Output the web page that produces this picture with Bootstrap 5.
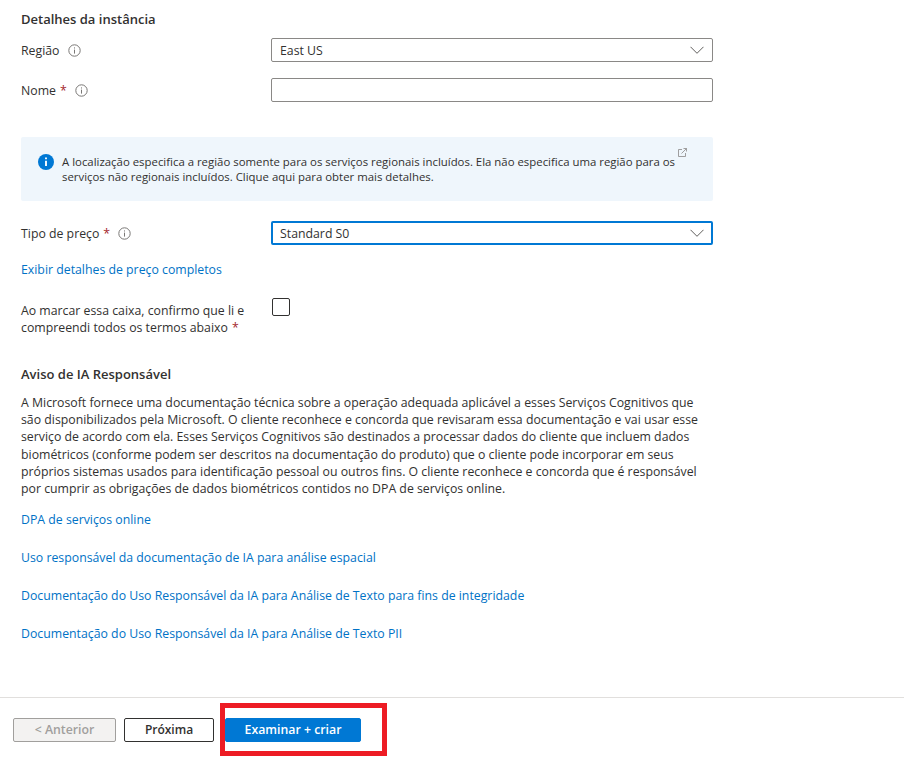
<!DOCTYPE html>
<html lang="pt">
<head>
    <meta charset="UTF-8">
    <meta name="viewport" content="width=device-width, initial-scale=1.0">
    <title>Detalhes da instância</title>

    <link href="https://cdn.jsdelivr.net/npm/bootstrap@5.3.0/dist/css/bootstrap.min.css" rel="stylesheet">

    <style>
        body {
            font-family: "Open Sans", "Noto Sans", sans-serif;
            font-size: 12.3px;
            line-height: 17px;
            color: #323130;
            background: #fff;
        }
        a { color: #0072c6; text-decoration: none; }

        .form-area { width: 713px; padding: 11px 0 0 21px; height: 697px; }
        .sec-title { font-weight: 600; font-size: 13px; line-height: 17px; margin: 0; }
        .field-row { display: flex; align-items: center; height: 24px; }
        .field-label { width: 250px; display: flex; align-items: center; }
        .req { color: #a4262c; margin-left: 4px; }
        .tip-icon { width: 13px; height: 13px; margin-left: 8px; color: #797775; }

        .az-input {
            flex: 1;
            height: 24px;
            border: 1px solid #8a8886;
            border-radius: 2px;
            padding: 0 8px;
            display: flex;
            align-items: center;
            justify-content: space-between;
            background: #fff;
        }
        .az-input.is-focus { border: 2px solid #0078d4; padding: 0 7px; }
        .az-input svg { width: 14px; height: 8px; color: #605e5c; }

        .info-box {
            background: #eff6fc;
            border-radius: 2px;
            height: 64px;
            margin-top: 35px;
            padding: 17px 17px;
            display: flex;
            font-size: 11.4px;
            line-height: 15px;
            position: relative;
        }
        .info-box .info-dot { width: 16px; height: 16px; flex: none; margin: 0 8px 0 0; }
        .info-box p { margin: 0; width: 625px; }
        .ext-icon { position: absolute; right: 26px; top: 11px; width: 9px; height: 9px; color: #8a8886; }

        .check-box {
            width: 18px;
            height: 18px;
            border: 1px solid #323130;
            border-radius: 2px;
            margin-left: 1px;
        }
        .check-label { width: 250px; padding-top: 4px; }
        .terms-text { margin: 11px 0 0; width: 680px; line-height: 17.2px; }

        .page-foot { border-top: 1px solid #e1dfdd; height: 61px; position: relative; padding: 20px 0 0 13px; }
        .az-btn {
            height: 24px;
            font-size: 12.3px;
            font-weight: 600;
            line-height: 22px;
            padding: 0;
            text-align: center;
            --bs-btn-border-radius: 2px;
        }
        .btn-prev { width: 103px; background: #f3f2f1; border: 1px solid #a19f9d; color: #a19f9d; margin-right: 8px; }
        .btn-prev:disabled { background: #f3f2f1; border-color: #a19f9d; color: #a19f9d; opacity: 1; }
        .btn-next { width: 90px; background: #fff; border: 1px solid #323130; color: #323130; margin-right: 11px; font-size: 12px; }
        .btn-review { width: 136px; background: #0078d4; border: 1px solid #0078d4; color: #fff; }
        .red-mark {
            position: absolute;
            left: 220px;
            top: 5px;
            width: 167px;
            height: 53px;
            border: 5px solid #ed1c24;
            pointer-events: none;
        }
    </style>
</head>
<body>

    <div class="form-area">
        <h6 class="sec-title">Detalhes da instância</h6>

        <div class="field-row" style="margin-top:10px">
            <div class="field-label">Região
                <svg class="tip-icon" viewBox="0 0 13 13" fill="none" stroke="currentColor"><circle cx="6.5" cy="6.5" r="5.7"/><path d="M6.5 5.6v4M6.5 3.4v1.1"/></svg>
            </div>
            <div class="az-input">East US
                <svg viewBox="0 0 14 8" fill="none" stroke="currentColor"><path d="M.5.8l6.5 6.5L13.5.8"/></svg>
            </div>
        </div>

        <div class="field-row" style="margin-top:16px">
            <div class="field-label">Nome<span class="req">*</span>
                <svg class="tip-icon" viewBox="0 0 13 13" fill="none" stroke="currentColor"><circle cx="6.5" cy="6.5" r="5.7"/><path d="M6.5 5.6v4M6.5 3.4v1.1"/></svg>
            </div>
            <div class="az-input"></div>
        </div>

        <div class="info-box">
            <svg class="info-dot" viewBox="0 0 17 17"><circle cx="8.5" cy="8.5" r="8.5" fill="#0078d4"/><path d="M8.5 7.2v5.6M8.5 3.8v1.8" stroke="#fff" stroke-width="2"/></svg>
            <p>A localização especifica a região somente para os serviços regionais incluídos. Ela não especifica uma região para os serviços não regionais incluídos. Clique aqui para obter mais detalhes.</p>
            <svg class="ext-icon" viewBox="0 0 9 9" fill="none" stroke="currentColor" stroke-width=".8"><path d="M4 1.5H.5v7h7V5M3.5 5.5L8.5.5M5.5.5h3v3"/></svg>
        </div>

        <div class="field-row" style="margin-top:20px">
            <div class="field-label">Tipo de preço<span class="req">*</span>
                <svg class="tip-icon" viewBox="0 0 13 13" fill="none" stroke="currentColor"><circle cx="6.5" cy="6.5" r="5.7"/><path d="M6.5 5.6v4M6.5 3.4v1.1"/></svg>
            </div>
            <div class="az-input is-focus">Standard S0
                <svg viewBox="0 0 14 8" fill="none" stroke="currentColor"><path d="M.5.8l6.5 6.5L13.5.8"/></svg>
            </div>
        </div>

        <div style="margin-top:16px"><a href="#">Exibir detalhes de preço completos</a></div>

        <div class="d-flex" style="margin-top:20px">
            <div class="check-label">Ao marcar essa caixa, confirmo que li e compreendi todos os termos abaixo<span class="req">*</span></div>
            <div class="check-box"></div>
        </div>

        <h6 class="sec-title" style="margin-top:30px">Aviso de IA Responsável</h6>
        <p class="terms-text">A Microsoft fornece uma documentação técnica sobre a operação adequada aplicável a esses Serviços Cognitivos que são disponibilizados pela Microsoft. O cliente reconhece e concorda que revisaram essa documentação e vai usar esse serviço de acordo com ela. Esses Serviços Cognitivos são destinados a processar dados do cliente que incluem dados biométricos (conforme podem ser descritos na documentação do produto) que o cliente pode incorporar em seus próprios sistemas usados para identificação pessoal ou outros fins. O cliente reconhece e concorda que é responsável por cumprir as obrigações de dados biométricos contidos no DPA de serviços online.</p>

        <div class="d-flex flex-column align-items-start" style="margin-top:14px;gap:21px">
            <a href="#">DPA de serviços online</a>
            <a href="#">Uso responsável da documentação de IA para análise espacial</a>
            <a href="#">Documentação do Uso Responsável da IA para Análise de Texto para fins de integridade</a>
            <a href="#">Documentação do Uso Responsável da IA para Análise de Texto PII</a>
        </div>
    </div>

    <div class="page-foot d-flex align-items-start">
        <button class="btn az-btn btn-prev" disabled>&lt; Anterior</button>
        <button class="btn az-btn btn-next">Próxima</button>
        <button class="btn az-btn btn-review">Examinar + criar</button>
        <div class="red-mark"></div>
    </div>

    <script src="https://cdn.jsdelivr.net/npm/bootstrap@5.3.0/dist/js/bootstrap.bundle.min.js"></script>
</body>
</html>
